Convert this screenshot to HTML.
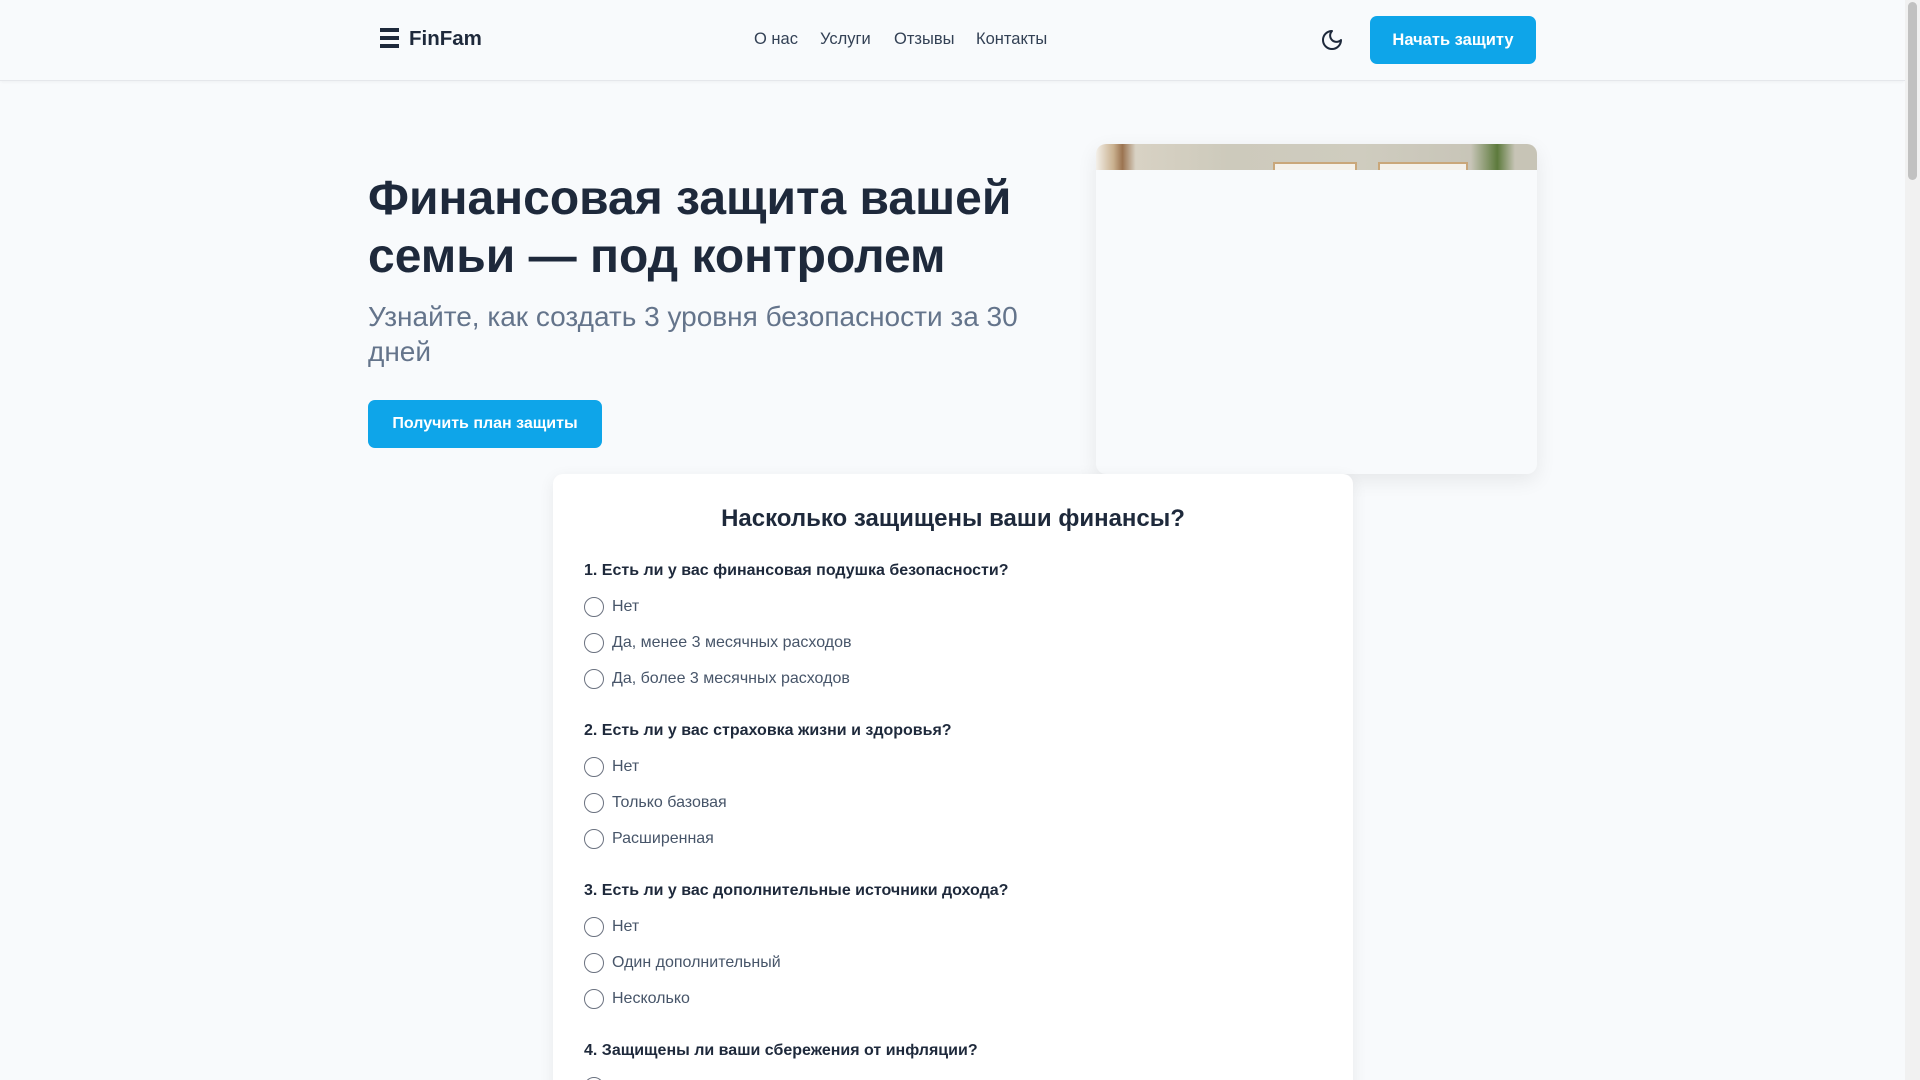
<!DOCTYPE html>
<html><head><meta charset="utf-8"><style>
*{box-sizing:border-box;margin:0;padding:0}
html,body{width:1920px;height:1080px;overflow:hidden}
body{background:#f8fafc;font-family:"Liberation Sans","Noto Sans CJK SC",sans-serif;color:#1e293b;position:relative}
.hdr{position:absolute;left:0;top:0;width:1905px;height:81px;border-bottom:1px solid #e5e7eb;background:#f8fafc;box-shadow:0 1px 3px rgba(0,0,0,.04)}
.sb{position:absolute;right:0;top:0;width:15px;height:1080px;background:#f1f1f1}
.sb div{position:absolute;left:3px;top:2px;width:9px;height:178px;background:#c1c1c1;border-radius:5px}
.burger{position:absolute;left:380px;top:28px;width:19px}
.burger i{display:block;height:4px;background:#1e293b;margin-bottom:4px}
.logo{position:absolute;left:409px;top:27px;font-size:20.5px;font-weight:bold}
.nav{position:absolute;top:30px;font-size:16.5px;color:#334155}
.btn{position:absolute;background:#0ea5e9;color:#fff;font-weight:bold;border-radius:7px;display:flex;align-items:center;justify-content:center;font-size:16px}
h1{position:absolute;left:368px;top:170px;font-size:48px;line-height:58px;font-weight:bold;width:700px;color:#1e293b}
.sub{position:absolute;left:368px;top:299px;font-size:28px;line-height:35px;color:#64748b;width:670px}
.imgc{position:absolute;left:1096px;top:144px;width:441px;height:330px;background:#f8fafc;border-radius:10px;overflow:hidden;box-shadow:0 6px 20px rgba(0,0,0,.08)}
.strip{height:26px;background:linear-gradient(90deg,#f3f0ea 0,#c9b08e 4%,#9b7350 6%,#d8d2c4 9%,#cdcabc 30%,#cfccbf 60%,#c8c5b8 85%,#5d7a3c 91%,#c7c4b6 95%);position:relative}
.strip span{position:absolute;top:18px;height:8px;border:2px solid #c9a77a;border-bottom:none;background:#f4f1ea}
.quiz{position:absolute;left:553px;top:474px;width:800px;height:620px;background:#fff;border-radius:10px;box-shadow:0 4px 16px rgba(0,0,0,.07)}
.qt{position:absolute;width:800px;text-align:center;top:505px;font-size:24px;font-weight:bold}
.q{position:absolute;left:584px;font-size:16px;font-weight:bold;color:#1e293b}
.o{position:absolute;left:584px;font-size:16px;color:#475569;display:flex;align-items:center}
.o i{width:20px;height:20px;border:1.5px solid #6b7280;border-radius:50%;margin-right:8px;display:inline-block}
</style></head><body>
<div class="hdr"></div>
<div class="burger"><i></i><i></i><i></i></div>
<div class="logo">FinFam</div>
<div class="nav" style="left:754px">О нас</div>
<div class="nav" style="left:820px">Услуги</div>
<div class="nav" style="left:894px">Отзывы</div>
<div class="nav" style="left:976px">Контакты</div>
<svg style="position:absolute;left:1320px;top:28px" width="24" height="24" viewBox="0 0 24 24" fill="none" stroke="#1e293b" stroke-width="2" stroke-linecap="round" stroke-linejoin="round"><path d="M12 3a6 6 0 0 0 9 9 9 9 0 1 1-9-9Z"/></svg>
<div class="btn" style="left:1370px;top:16px;width:166px;height:48px;font-size:16.5px">Начать защиту</div>
<h1>Финансовая защита вашей семьи — под контролем</h1>
<div class="sub">Узнайте, как создать 3 уровня безопасности за 30 дней</div>
<div class="btn" style="left:368px;top:400px;width:234px;height:48px">Получить план защиты</div>
<div class="imgc"><div class="strip"><span style="left:177px;width:84px"></span><span style="left:282px;width:90px"></span></div></div>
<div class="quiz"></div>
<div class="qt" style="left:553px">Насколько защищены ваши финансы?</div>
<div class="q" style="top:562px">1. Есть ли у вас финансовая подушка безопасности?</div>
<div class="o" style="top:597px"><i></i>Нет</div>
<div class="o" style="top:633px"><i></i>Да, менее 3 месячных расходов</div>
<div class="o" style="top:669px"><i></i>Да, более 3 месячных расходов</div>
<div class="q" style="top:722px">2. Есть ли у вас страховка жизни и здоровья?</div>
<div class="o" style="top:757px"><i></i>Нет</div>
<div class="o" style="top:793px"><i></i>Только базовая</div>
<div class="o" style="top:829px"><i></i>Расширенная</div>
<div class="q" style="top:882px">3. Есть ли у вас дополнительные источники дохода?</div>
<div class="o" style="top:917px"><i></i>Нет</div>
<div class="o" style="top:953px"><i></i>Один дополнительный</div>
<div class="o" style="top:989px"><i></i>Несколько</div>
<div class="q" style="top:1042px">4. Защищены ли ваши сбережения от инфляции?</div>
<div class="o" style="top:1077px"><i></i>Нет</div>
<div class="sb"><div></div></div>
</body></html>
